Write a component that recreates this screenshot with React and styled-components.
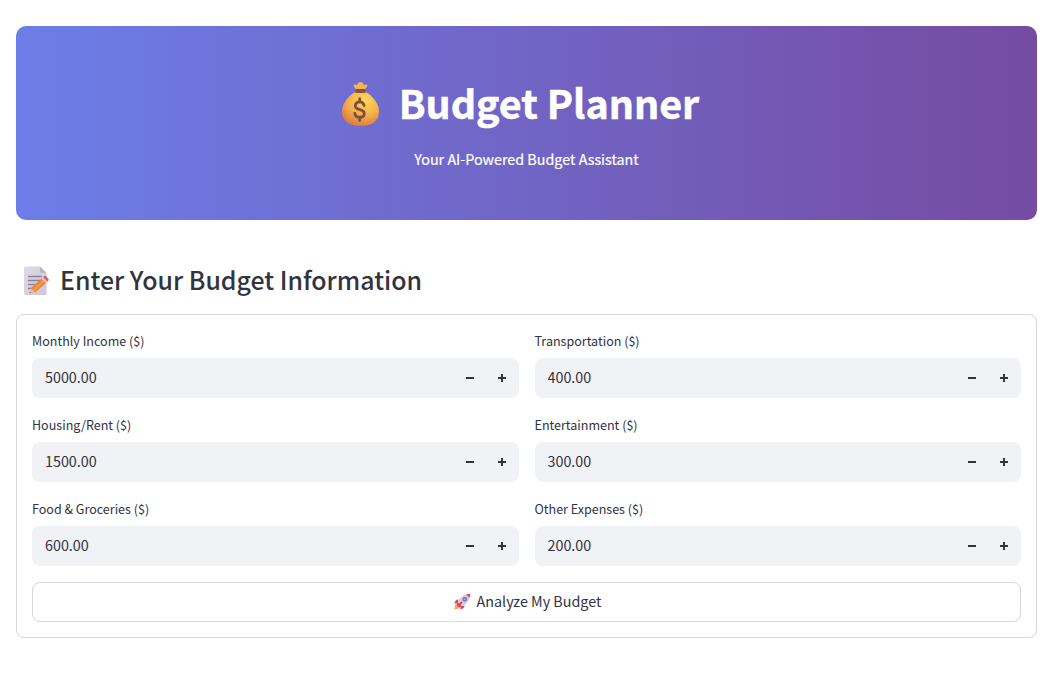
import React, { useState } from "react";
import styled, { createGlobalStyle } from "styled-components";

const GlobalStyle = createGlobalStyle`
  *, *::before, *::after { box-sizing: border-box; }
  body {
    margin: 0;
    background: #ffffff;
    color: #31333f;
    font-family: "Source Sans Pro", "Noto Sans CJK SC", "Noto Sans", sans-serif;
    font-size: 14.33px;
  }
`;

const Page = styled.main`
  width: 1058px;
  height: 687px;
  padding: 26px 21px 0 16px;
  overflow: hidden;
`;

const Hero = styled.header`
  height: 194px;
  padding-top: 51px;
  border-radius: 10px;
  background: linear-gradient(90deg, #6c7ee8 0%, #764ba2 100%);
  color: #ffffff;
  display: flex;
  flex-direction: column;
  align-items: center;
`;

const HeroTitle = styled.h1`
  margin: 0;
  padding-right: 12px;
  height: 54px;
  display: flex;
  align-items: center;
  gap: 20px;
  font-size: 39.4px;
  line-height: 54px;
  font-weight: 700;
  white-space: nowrap;
`;

const Tagline = styled.p`
  margin: 16px 0 0;
  line-height: 24px;
  -webkit-text-stroke: 0.2px currentColor;
`;

const SectionTitle = styled.h2`
  margin: 43px 0 0;
  height: 36px;
  padding-left: 7px;
  display: flex;
  align-items: center;
  gap: 9px;
  font-size: 24.9px;
  font-weight: 500;
  line-height: 36px;
  white-space: nowrap;
`;

const SectionText = styled.span`
  padding-bottom: 4px;
`;

const Form = styled.form`
  margin-top: 15px;
  height: 324px;
  padding: 15px;
  border: 1px solid #d6d6d9;
  border-radius: 8px;
`;

const Fields = styled.div`
  display: grid;
  grid-template-columns: 1fr 1fr;
  gap: 16px;
`;

const Field = styled.div`
  min-width: 0;
`;

const Label = styled.label`
  display: block;
  height: 28px;
  font-size: 12.54px;
  line-height: 22px;
`;

const NumberBox = styled.div`
  height: 40px;
  display: flex;
  align-items: center;
  border-radius: 8px;
  background: #f0f2f6;
  overflow: hidden;
`;

const NumberInput = styled.input`
  flex: 1;
  min-width: 0;
  height: 40px;
  padding: 0 0 3px 13px;
  border: 0;
  outline: 0;
  background: transparent;
  color: inherit;
  font: inherit;
`;

const StepButton = styled.button`
  width: 32px;
  height: 40px;
  padding: 0;
  border: 0;
  background: transparent;
  color: #31333f;
  display: flex;
  align-items: center;
  justify-content: center;
`;

const SubmitButton = styled.button`
  width: 100%;
  height: 40px;
  margin-top: 16px;
  padding: 0 0 1px 2px;
  border: 1px solid #d6d6d9;
  border-radius: 8px;
  background: #ffffff;
  color: inherit;
  font: inherit;
  display: flex;
  align-items: center;
  justify-content: center;
  gap: 6px;
`;

const SubmitText = styled.span`
  padding-bottom: 2px;
`;

const Icon = styled.svg`
  display: block;
  flex: none;
`;

const MoneyBag = () => (
  <Icon width="37" height="46" viewBox="0 0 38 46" preserveAspectRatio="none">
    <defs>
      <radialGradient id="bag" cx=".62" cy=".25" r=".8">
        <stop offset="0" stopColor="#ffd85c" />
        <stop offset=".55" stopColor="#f3b24a" />
        <stop offset="1" stopColor="#d9783f" />
      </radialGradient>
    </defs>
    <path d="M14.5 9 12.200 5.600c-.8-1.600.5-2.600 2-2l1.300.5C16.200 2 17.200.9 19 .9s2.800 1.100 3.500 3.200l1.300-.5c1.500-.6 2.800.4 2 2L23.500 9Z" fill="#f3b456" />
    <path d="M14 11h10C30.500 14 38 22 38 30.500 38 40 31 45 19 45S0 40 0 30.500C0 22 7.500 14 14 11Z" fill="url(#bag)" />
    <rect x="13.800" y="8" width="10.400" height="4" rx="1" fill="#8c513e" />
    <path d="M22.700 24.500c-.5-2.300-2.100-3.600-4.500-3.600-2.700 0-4.500 1.500-4.500 3.800 0 5.200 9.200 2.800 9.200 7.700 0 2.500-1.900 3.900-4.700 3.900s-4.700-1.400-5-4M18.200 17.700v3.300m0 15v3.600" fill="none" stroke="#80503e" strokeWidth="2.900" strokeLinecap="round" />
  </Icon>
);

const Memo = () => (
  <Icon width="28" height="30" viewBox="0 0 28 30">
    <defs>
      <linearGradient id="paper" x2="1" y2="1">
        <stop stopColor="#dddbe4" />
        <stop offset="1" stopColor="#cec8d8" />
      </linearGradient>
    </defs>
    <path d="M2.500.5H17l6.500 6.500v20.500c0 .8-.7 1.500-1.500 1.500H2.500c-.8 0-1.500-.7-1.500-1.500V2C1 1.200 1.700.5 2.500.5Z" fill="url(#paper)" />
    <path d="M17 .5v5c0 .8.700 1.500 1.500 1.500h5Z" fill="#bbb4c7" />
    <path d="M5 10.500h14M5 14.500h12M5 18.500h8M5 22.500h4" stroke="#8c8499" strokeWidth="1.300" />
    <path d="m8 22-1.500 5.300 5.700-.7Z" fill="#efbd91" />
    <path d="m8 22 10.500-9.500 4.300 4.800-10.600 9.300Z" fill="#ef823b" />
    <path d="m10.500 24.300 10-9.100" stroke="#ff9b4e" strokeWidth="1.700" />
    <path d="m18.500 12.500 1.700-1.500 4.300 4.800-1.700 1.500Z" fill="#d9c5c9" />
    <path d="m20.200 11 .8-.7c.7-.6 1.500-.6 2.100 0l2.200 2.500c.6.700.5 1.500-.1 2.100l-.7.900Z" fill="#e85750" />
    <path d="m6.500 27.300.3-1.500 1.200 1.300Z" fill="#5c4651" />
  </Icon>
);

const Rocket = () => (
  <Icon width="17" height="17" viewBox="0 0 17 17">
    <path d="m1.500 11-1.300 5.500L6 15.200 4.500 12Z" fill="#f9a642" />
    <path d="M4.200 6.300C2.500 6.600 1 8.200.4 10.500l4-.2ZM10.700 12.800c-.3 1.700-1.900 3.200-4.200 3.800l.2-4Z" fill="#dc3d70" />
    <path d="M3.500 10C4.700 5.500 8.500 1.300 16.300.7 15.700 8.500 11.500 12.300 7 13.500Z" fill="#d8cce1" />
    <path d="M12.200 1.500c1.200-.4 2.600-.7 4.100-.8-.1 1.500-.4 2.900-.8 4.100Z" fill="#df4170" />
    <path d="m2.500 11.200 1-2 4.300 4.300-2 1Z" fill="#e04472" />
    <circle cx="10.800" cy="6.200" r="2.200" fill="#5268a9" />
    <circle cx="10.800" cy="6.200" r="1.200" fill="#77b5e5" />
    <path d="m4.300 12.700 3.200-3.200" stroke="#d93d69" strokeWidth="1.800" strokeLinecap="round" />
  </Icon>
);

const StepIcon = ({ plus }) => (
  <Icon width="8" height="8" viewBox="0 0 8 8">
    <path d={plus ? "M0 4h8M4 0v8" : "M0 4h8"} stroke="currentColor" strokeWidth="2" />
  </Icon>
);

const Stepper = styled.div`
  display: flex;
  padding-right: 1px;
`;

const HeroText = styled.span`
  padding-bottom: 4px;
  -webkit-text-stroke: 0.5px currentColor;
`;

const FIELDS = [
  ["income", "Monthly Income ($)", 5000],
  ["transport", "Transportation ($)", 400],
  ["housing", "Housing/Rent ($)", 1500],
  ["fun", "Entertainment ($)", 300],
  ["food", "Food & Groceries ($)", 600],
  ["other", "Other Expenses ($)", 200],
];

function NumberField({ id, label, initial }) {
  const [value, setValue] = useState(initial.toFixed(2));
  const step = (by) => setValue((v) => Math.max(0, (Number(v) || 0) + by).toFixed(2));
  return (
    <Field>
      <Label htmlFor={id}>{label}</Label>
      <NumberBox>
        <NumberInput id={id} value={value} onChange={(e) => setValue(e.target.value)} />
        <Stepper>
          <StepButton type="button" aria-label="Decrease" onClick={() => step(-50)}>
            <StepIcon />
          </StepButton>
          <StepButton type="button" aria-label="Increase" onClick={() => step(50)}>
            <StepIcon plus />
          </StepButton>
        </Stepper>
      </NumberBox>
    </Field>
  );
}

export default function App() {
  return (
    <>
      <GlobalStyle />
      <Page>
        <Hero>
          <HeroTitle>
            <MoneyBag />
            <HeroText>Budget Planner</HeroText>
          </HeroTitle>
          <Tagline>Your AI-Powered Budget Assistant</Tagline>
        </Hero>
        <SectionTitle>
          <Memo />
          <SectionText>Enter Your Budget Information</SectionText>
        </SectionTitle>
        <Form onSubmit={(e) => e.preventDefault()}>
          <Fields>
            {FIELDS.map(([id, label, initial]) => (
              <NumberField key={id} id={id} label={label} initial={initial} />
            ))}
          </Fields>
          <SubmitButton type="submit">
            <Rocket />
            <SubmitText>Analyze My Budget</SubmitText>
          </SubmitButton>
        </Form>
      </Page>
    </>
  );
}
